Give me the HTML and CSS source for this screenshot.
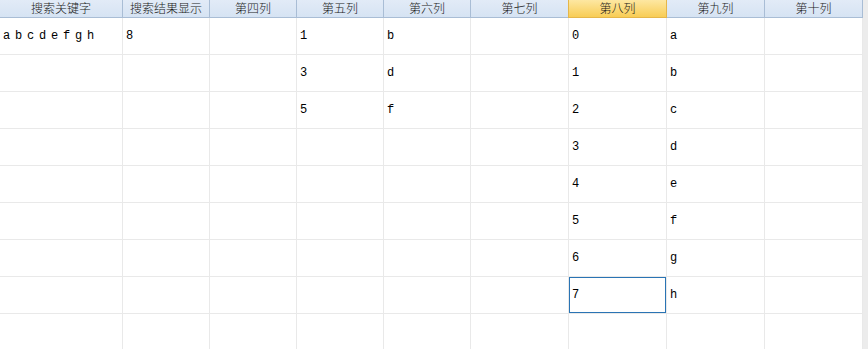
FILE: index.html
```html
<!DOCTYPE html>
<html lang="zh-CN">
<head>
<meta charset="utf-8">
<title>Grid</title>
<link rel="stylesheet" href="styles.css">
</head>
<body>
<div class="frame">
  <div class="grid">
    <div class="hd">搜索关键字</div>
    <div class="hd">搜索结果显示</div>
    <div class="hd">第四列</div>
    <div class="hd">第五列</div>
    <div class="hd">第六列</div>
    <div class="hd">第七列</div>
    <div class="hd hd-active">第八列</div>
    <div class="hd">第九列</div>
    <div class="hd">第十列</div>

    <div class="c">a b c d e f g h</div><div class="c">8</div><div class="c"></div><div class="c">1</div><div class="c">b</div><div class="c"></div><div class="c">0</div><div class="c">a</div><div class="c"></div>
    <div class="c"></div><div class="c"></div><div class="c"></div><div class="c">3</div><div class="c">d</div><div class="c"></div><div class="c">1</div><div class="c">b</div><div class="c"></div>
    <div class="c"></div><div class="c"></div><div class="c"></div><div class="c">5</div><div class="c">f</div><div class="c"></div><div class="c">2</div><div class="c">c</div><div class="c"></div>
    <div class="c"></div><div class="c"></div><div class="c"></div><div class="c"></div><div class="c"></div><div class="c"></div><div class="c">3</div><div class="c">d</div><div class="c"></div>
    <div class="c"></div><div class="c"></div><div class="c"></div><div class="c"></div><div class="c"></div><div class="c"></div><div class="c">4</div><div class="c">e</div><div class="c"></div>
    <div class="c"></div><div class="c"></div><div class="c"></div><div class="c"></div><div class="c"></div><div class="c"></div><div class="c">5</div><div class="c">f</div><div class="c"></div>
    <div class="c"></div><div class="c"></div><div class="c"></div><div class="c"></div><div class="c"></div><div class="c"></div><div class="c">6</div><div class="c">g</div><div class="c"></div>
    <div class="c"></div><div class="c"></div><div class="c"></div><div class="c"></div><div class="c"></div><div class="c"></div><div class="c c-sel">7</div><div class="c">h</div><div class="c"></div>
    <div class="c"></div><div class="c"></div><div class="c"></div><div class="c"></div><div class="c"></div><div class="c"></div><div class="c"></div><div class="c"></div><div class="c"></div>
  </div>
</div>
</body>
</html>
```

FILE: styles.css
```css
html, body {
  margin: 0;
  padding: 0;
  background: #ececec;
  overflow: hidden;
}

.frame {
  width: 863px;
  height: 349px;
  background: #ffffff;
  overflow: hidden;
}

.grid {
  display: grid;
  grid-template-columns: 123px 87px 87px 87px 87px 98px 98px 98px 98px;
  grid-template-rows: 18px;
  grid-auto-rows: 37px;
}

.hd {
  box-sizing: border-box;
  height: 18px;
  background: linear-gradient(#e2ebf7, #d6e3f3);
  border-right: 1px solid #a9bdd5;
  border-bottom: 1px solid #a9bdd5;
  font-family: "Noto Sans CJK SC", sans-serif;
  font-size: 12px;
  font-weight: 300;
  line-height: 16px;
  color: #1a1a1a;
  text-align: center;
}

.hd-active {
  background: linear-gradient(#fde7a2, #f8cd55);
  border-right: 1px solid #e5b649;
  border-bottom: 1px solid #e5b649;
  border-left: 1px solid #e5b649;
  margin-left: -1px;
}

.c {
  box-sizing: border-box;
  border-right: 1px solid #e9e9e9;
  border-bottom: 1px solid #e9e9e9;
  padding-left: 3px;
  display: flex;
  align-items: center;
  font-family: "Liberation Mono", monospace;
  font-size: 12px;
  letter-spacing: -1.2px;
  color: #000;
  white-space: pre;
}

.c-sel {
  box-shadow: inset 0 0 0 1px #2a74b4;
  padding-left: 3px;
}
```
